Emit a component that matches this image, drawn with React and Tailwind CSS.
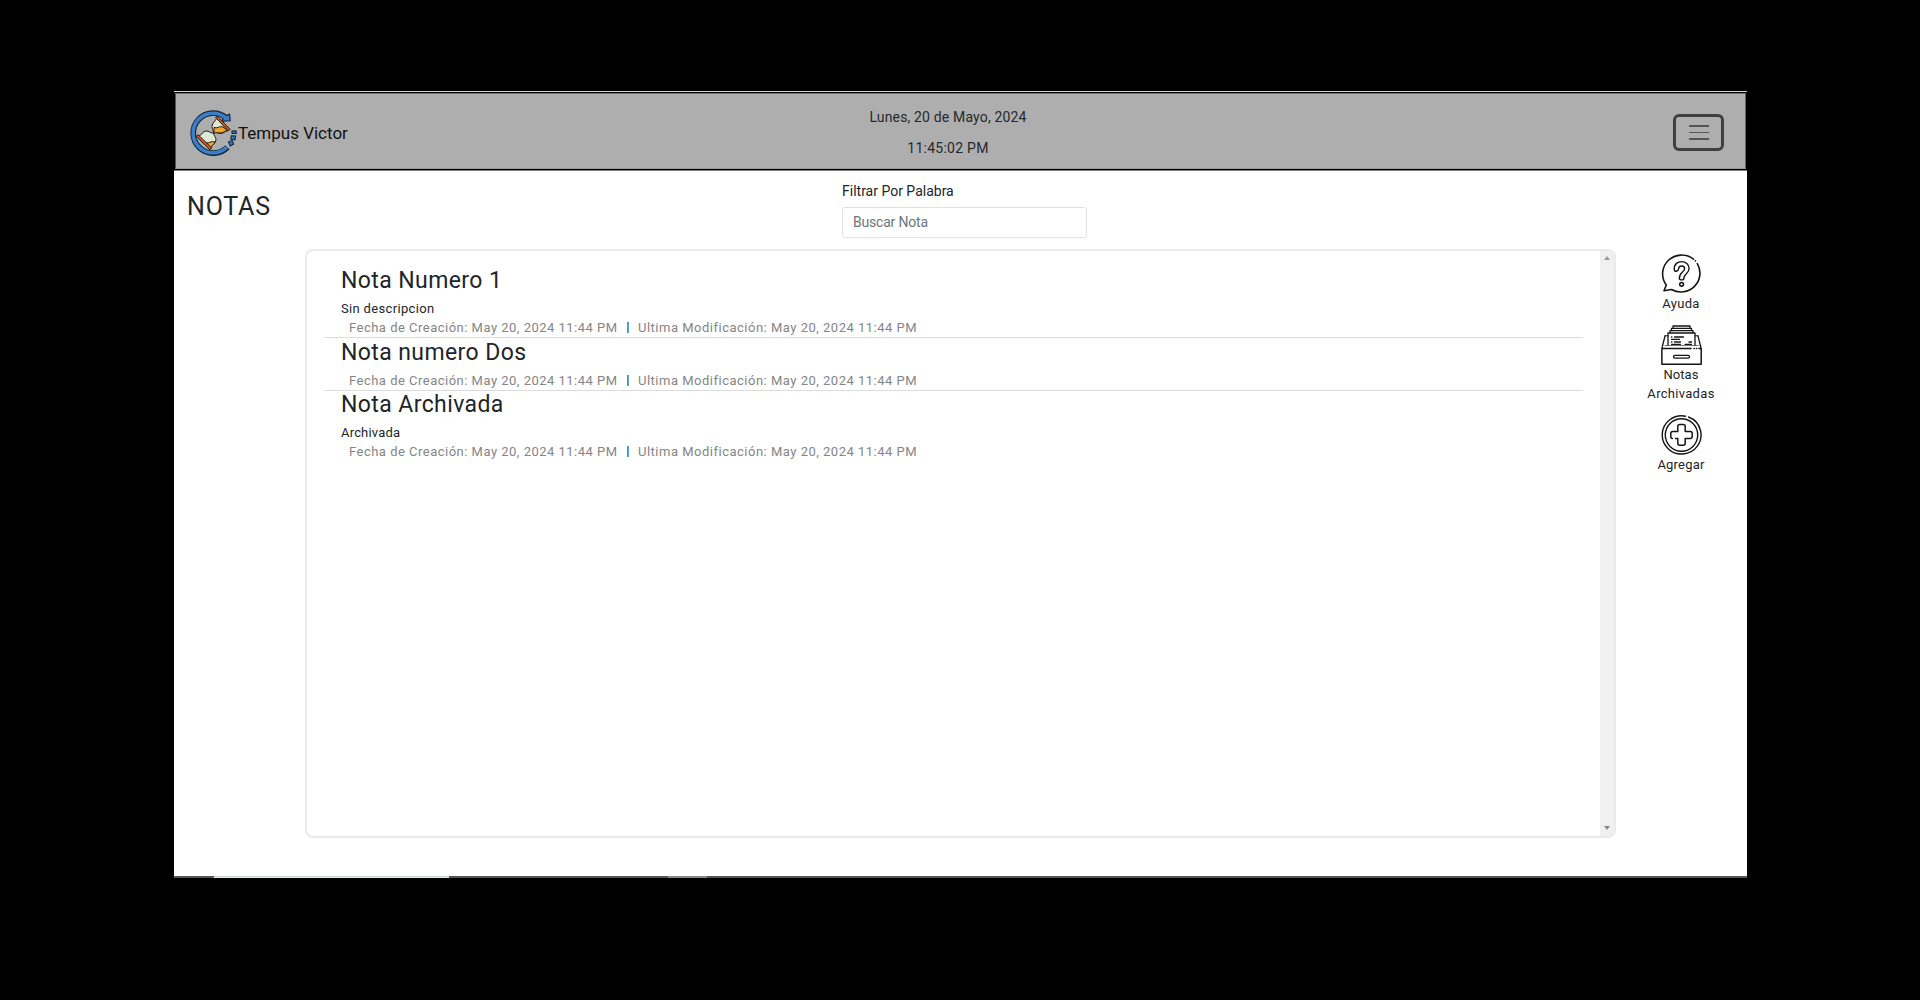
import React from "react";

const created = "Fecha de Creación: May 20, 2024 11:44 PM";
const modified = "Ultima Modificación: May 20, 2024 11:44 PM";

function Logo() {
  return (
    <svg className="h-[46px] w-[48px] shrink-0" viewBox="0 0 48 46" fill="none">
      <path d="M36.500 8.200A20 20 0 1 0 37.500 37.200" stroke="#16283c" strokeWidth="5.800" />
      <path d="M34.500 6.500l5-2.300.8 6.600-8.800.6z" fill="#3a7fc8" stroke="#16283c" strokeWidth="1.200" />
      <path d="M36.500 8.600A19.800 19.800 0 1 0 37 36.900" stroke="#3a7fc8" strokeWidth="3.600" />
      <g fill="#3479bf" stroke="#16283c" strokeWidth="1.100">
        <path d="M38.500 32l3.600-1.400 1.600 3.400-3.500 2z" />
        <path d="M41.300 25.700l4.300.2-.6 3.900-4.200-.5z" />
        <path d="M42 21l4-.2.300 2.600-4.200.1z" />
      </g>
      <g stroke="#1d1d1b" strokeWidth="1" strokeLinejoin="round">
        <path d="M26.500 8.500c-1 3-4.500 4-4.500 8 0 2.500 1.500 4 1.500 6.500 3.500-1.500 4 .5 7 .5 3.500 0 5-3 8-3z" fill="#dfe8d6" />
        <path d="M24 17.500c3.500 1.500 5.500-2 9-.5l4.500 3.500c-3 .5-4.500 2.800-7.500 2.500-2.500-.3-4-.5-6 .2z" fill="#f7a42c" />
        <path d="M23.500 23c-3 .5-4.500-2.500-7.500-2-3.500.5-4.500 4.500-8 5.500L20.500 38c1-3.500 5-4 5.500-8 .2-2.500-2-4-2.500-7z" fill="#dfe8d6" />
        <path d="M16 33c3.500.5 5-2.500 9-1-1 2.500-3.500 3.500-4.500 6.500z" fill="#f7a42c" />
        <path d="M25.600 7.400l1.600-1.400L40 19.200l-1.700 1.700z" fill="#dc5a14" />
        <path d="M6.200 26.300l1.800-1.600 13.700 13.200-1.700 1.900z" fill="#dc5a14" />
      </g>
    </svg>
  );
}

function HelpIcon() {
  return (
    <svg className="h-10 w-[41px]" viewBox="0 0 41 40" fill="none" stroke="#151515" strokeLinecap="round" strokeLinejoin="round">
      <path d="M32.500 5.200A19 18.800 0 0 0 5.300 31L3 36.700l7.500-1.200A19 18.800 0 0 0 36.300 9.600" strokeWidth="1.600" />
      <path d="M34.300 6.800l.2.200" strokeWidth="1.600" />
      <path d="M13.300 16c-.6-6.500 4-8.400 7.200-8.400 4.200 0 7.600 3 7.600 7 0 5-5.200 5.400-5.200 9.600 0 2.200-4.600 2.200-4.600 0 0-6 5.300-6.200 5.300-9.500 0-3.600-5.700-3.600-6 0-.2 3-4.300 3.200-4.300 1.300z" strokeWidth="1.400" />
      <circle cx="20.600" cy="30.300" r="1.900" strokeWidth="1.500" />
    </svg>
  );
}

function ArchiveIcon() {
  return (
    <svg className="h-10 w-[41px]" viewBox="0 0 41 40" fill="none" stroke="#151515" strokeLinecap="round" strokeLinejoin="round">
      <path d="M30 23.500H.9v15.700h39.300V23.500H38m-5 0h.4m2 0h.4" strokeWidth="1.500" />
      <path d="M1 23l3-12.200M40 23l-3-12.200" strokeWidth="1.300" />
      <path d="M4 20.500h33" strokeWidth="1.200" stroke="#777" />
      <path d="M7 20V8h27v12M9 8V5.600h23V8M10.500 5.600V3.300h20v2.300M12 3.300V1h17v2.300" strokeWidth="1.300" />
      <path d="M4 10.800h3m27 0h3" strokeWidth="1" />
      <path d="M10.500 12h.4m2.600 0h9M10.500 14.300h8M10.500 17h.4m2.600 0h6M28 17h2.500M10.500 19.300h9m4.500 0h6.500" strokeWidth="1.300" />
      <rect x="12.500" y="30.400" width="16" height="2.800" rx="1.400" strokeWidth="1.300" />
    </svg>
  );
}

function AddIcon() {
  return (
    <svg className="h-10 w-[41px]" viewBox="0 0 41 40" fill="none" stroke="#151515" strokeLinecap="round" strokeLinejoin="round">
      <path d="M24.500 1.200A19.400 19.100 0 1 0 39.500 15.500a19.400 19.100 0 0 0-12-13.500" strokeWidth="1.400" />
      <circle cx="20.500" cy="20" r="16.200" strokeWidth="1.400" />
      <path d="M14.500 23.600h2.300v4.700q0 2 2 2h3.400q2 0 2-2v-4.700h5q2 0 2-2v-3.200q0-2-2-2h-5v-5q0-2-2-2h-3.400q-2 0-2 2v5h-5q-2 0-2 2v3.200q0 2 1.600 2" strokeWidth="1.500" />
    </svg>
  );
}

function Title({ children }) {
  return <h2 className="h-[27px] pl-[17px] text-[23px] leading-[27px] tracking-[0.4px]">{children}</h2>;
}

function Dates() {
  return (
    <div className="flex h-[19px] items-center pl-[25px] text-[13px] leading-[19px] text-[#858585]">
      <span className="w-[268px] tracking-[0.49px]">{created}</span>
      <span className="ml-[10px] h-[11px] w-[2px] border-l border-[#b6782e] bg-[#59a6d8]" />
      <span className="ml-[9px] tracking-[0.5px]">{modified}</span>
    </div>
  );
}

export default function App() {
  return (
    <div className="h-[1000px] overflow-hidden bg-black pt-[91px] pl-[174px] font-['Roboto',sans-serif] text-[#212529] whitespace-nowrap">
      <div className="flex h-[787px] w-[1573px] flex-col bg-white">
        <header className="flex h-[80px] shrink-0 border-t border-b border-t-[#d9d5d9] border-b-[#777] bg-black p-px">
          <div className="flex w-full items-start border border-t-[#777] border-r-[#666] border-b-[#999] border-l-[#555] bg-[#aeaeae]">
            <div className="flex w-[500px] items-center pt-[16px] pl-[14px]">
              <Logo />
              <span className="text-[17px] leading-[23px] text-[#111]">Tempus Victor</span>
            </div>
            <div className="ml-[122px] flex w-[300px] flex-col items-center pt-[13px] text-[14px] leading-[21px] text-[#25292c]">
              <p className="mb-[10px] tracking-[0.16px]">Lunes, 20 de Mayo, 2024</p>
              <p className="tracking-[0.25px]">11:45:02 PM</p>
            </div>
            <button className="mt-[20px] mr-[21px] ml-auto flex h-[37px] w-[51px] flex-col items-center justify-center gap-[5px] rounded-[6px] border-[3px] border-[#3f3f3f]">
              <span className="h-[1.5px] w-[20px] bg-[#555]" />
              <span className="h-[1.5px] w-[20px] bg-[#555]" />
              <span className="h-[1.5px] w-[20px] bg-[#555]" />
            </button>
          </div>
        </header>

        <section className="flex h-[78px] shrink-0">
          <h1 className="w-[668px] pt-[21px] pl-[13px] text-[25px] leading-[30px] tracking-[0.8px]">NOTAS</h1>
          <div className="pt-[10px]">
            <label className="block h-[26px] text-[14px] leading-[21px]">Filtrar Por Palabra</label>
            <input
              className="block h-[31px] w-[245px] rounded-[3px] border border-[#dde2e7] px-[10px] pb-px text-[14px] tracking-[-0.2px] placeholder:text-[#6c757d]"
              placeholder="Buscar Nota"
            />
          </div>
        </section>

        <main className="flex">
          <div className="ml-[131px] flex h-[589px] w-[1311px] overflow-hidden rounded-[8px] border-2 border-[#eaeaea]">
            <div className="flex-1 px-[17px] pt-[15px]">
              <article className="h-[72px] border-b border-[#dcdcdc] pt-px">
                <Title>Nota Numero 1</Title>
                <p className="mt-[5px] h-[19px] pl-[17px] text-[13px] leading-[20px] tracking-[0.33px]">Sin descripcion</p>
                <Dates />
              </article>
              <article className="h-[53px] border-b border-[#dcdcdc] pt-px">
                <Title>Nota numero Dos</Title>
                <div className="mt-[5px]"><Dates /></div>
              </article>
              <article>
                <Title>Nota Archivada</Title>
                <p className="mt-[5px] h-[19px] pl-[17px] text-[13px] leading-[20px] tracking-[0.18px]">Archivada</p>
                <Dates />
              </article>
            </div>
            <div className="flex w-[14px] flex-col items-center justify-between bg-[#f0f0f0] pt-[5px] pb-[6px]">
              <svg className="h-[4px] w-[6px]" viewBox="0 0 6 4"><path d="M0 4L3 0l3 4z" fill="#999" /></svg>
              <svg className="h-[4px] w-[6px]" viewBox="0 0 6 4"><path d="M0 0h6L3 4z" fill="#888" /></svg>
            </div>
          </div>
          <nav className="ml-[15px] flex w-[100px] flex-col items-center pt-[5px] text-[13px] leading-[19px]">
            <a className="flex h-[71px] flex-col items-center"><HelpIcon /><span className="tracking-[0.28px]">Ayuda</span></a>
            <a className="flex h-[90px] flex-col items-center"><ArchiveIcon /><span className="tracking-[0.07px]">Notas</span><span className="tracking-[0.3px]">Archivadas</span></a>
            <a className="flex flex-col items-center"><AddIcon /><span className="tracking-[0.21px]">Agregar</span></a>
          </nav>
        </main>

        <footer className="mt-auto flex h-[2px] bg-[#555]">
          <div className="ml-[40px] w-[235px] border-t border-[#c8cfcb] bg-[#e8eeeb]" />
          <div className="ml-[219px] w-[39px] bg-[#888]" />
        </footer>
      </div>
    </div>
  );
}
